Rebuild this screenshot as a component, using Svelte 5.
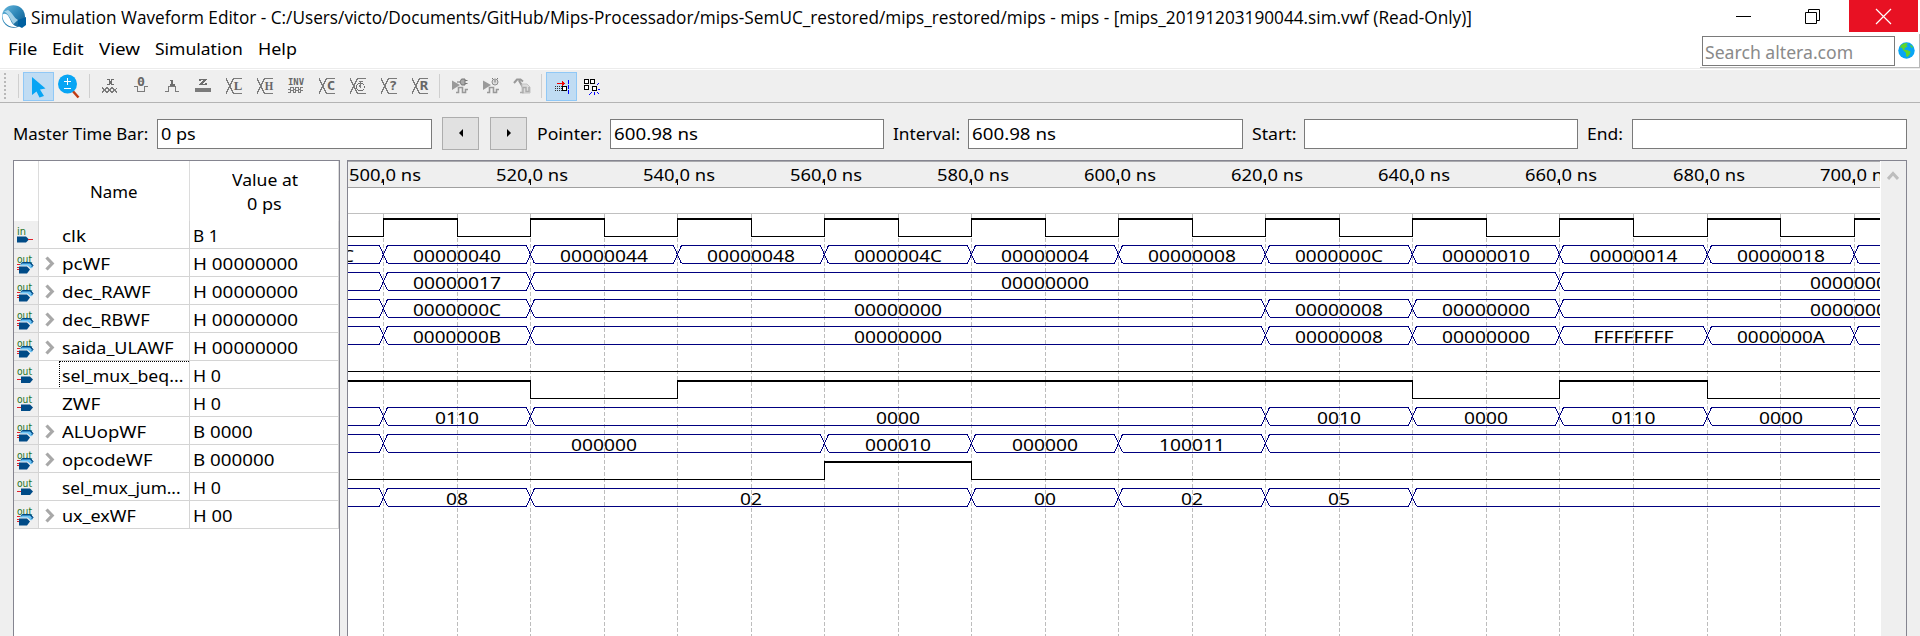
<script>
  // Stretches a label horizontally so it occupies exactly the given width.
  function fit(node, width) {
    const natural = node.offsetWidth;
    if (natural) node.style.transform = `scaleX(${width / natural})`;
  }

  const menu = [['File', 29], ['Edit', 32], ['View', 41], ['Simulation', 88], ['Help', 39]];

  const signals = [
    { name: 'clk', w: 24, value: 'B 1', vw: 25, kind: 'in' },
    { name: 'pcWF', w: 48, value: 'H 00000000', vw: 105, kind: 'bus' },
    { name: 'dec_RAWF', w: 89, value: 'H 00000000', vw: 105, kind: 'bus' },
    { name: 'dec_RBWF', w: 88, value: 'H 00000000', vw: 105, kind: 'bus' },
    { name: 'saida_ULAWF', w: 112, value: 'H 00000000', vw: 105, kind: 'bus' },
    { name: 'sel_mux_beq...', w: 121, value: 'H 0', vw: 28, kind: 'out', focus: true },
    { name: 'ZWF', w: 38, value: 'H 0', vw: 28, kind: 'out' },
    { name: 'ALUopWF', w: 84, value: 'B 0000', vw: 60, kind: 'bus' },
    { name: 'opcodeWF', w: 90, value: 'B 000000', vw: 82, kind: 'bus' },
    { name: 'sel_mux_jum...', w: 119, value: 'H 0', vw: 28, kind: 'out' },
    { name: 'ux_exWF', w: 74, value: 'H 00', vw: 39, kind: 'bus' }
  ];

  // Canvas coordinates start at the left edge of the wave area; one step is 10 ns.
  const gx = (step) => 35 + Math.round(73.53 * step);
  const grid = Array.from({ length: 21 }, (_, i) => gx(i));
  const ticks = Array.from({ length: 11 }, (_, i) => ({ x: gx(i * 2), label: `${500 + i * 20},0 ns` }));

  const buses = [
    { row: 1, edges: [-1, 0, 1, 2, 3, 4, 5, 6, 7, 8, 9, 10, 11], values: ['0000003C', '00000040', '00000044', '00000048', '0000004C', '00000004', '00000008', '0000000C', '00000010', '00000014', '00000018', ''] },
    { row: 2, edges: [0, 1, 8, 12], values: ['00000017', '00000000', '00000000'] },
    { row: 3, edges: [0, 1, 6, 7, 8, 12], values: ['0000000C', '00000000', '00000008', '00000000', '00000000'] },
    { row: 4, edges: [0, 1, 6, 7, 8, 9, 10], values: ['0000000B', '00000000', '00000008', '00000000', 'FFFFFFFF', '0000000A'] },
    { row: 7, edges: [0, 1, 6, 7, 8, 9, 10], values: ['0110', '0000', '0010', '0000', '0110', '0000'] },
    { row: 8, edges: [0, 3, 4, 5, 6], values: ['000000', '000010', '000000', '100011'] },
    { row: 10, edges: [0, 1, 4, 5, 6, 7], values: ['08', '02', '00', '02', '05'] }
  ];
  const levels = [
    { row: 0, start: 0, flips: Array.from({ length: 21 }, (_, i) => i) },
    { row: 5, start: 0, flips: [] },
    { row: 6, start: 1, flips: [2, 4, 14, 16, 18] },
    { row: 9, start: 0, flips: [6, 8] }
  ];
  const rowTop = (row) => 218 + 27 * row - 161;

  function busPath({ row, edges }) {
    const t = rowTop(row) + 0.5, b = t + 18;
    let d = `M0 ${t}`, e = `M0 ${b}`;
    for (const s of edges) {
      const x = gx(s * 2) + 0.5;
      if (x < 0 || x > 1540) continue;
      d += `H${x - 4}L${x + 4} ${b}M${x + 4} ${t}`;
      e += `H${x - 4}L${x + 4} ${t}M${x + 4} ${b}`;
    }
    return `${d}H1532${e}H1532`;
  }
  function levelSegments({ row, start, flips }) {
    const out = [];
    let x = 0, v = start;
    const t = rowTop(row);
    for (const s of [...flips, null]) {
      const nx = s === null ? 1532 : gx(s);
      out.push({ x, w: nx - x + 1, y: v ? t : t + 18, h: v ? 2 : 1 });
      if (s !== null) out.push({ x: nx, w: 1, y: t, h: 19 });
      x = nx;
      v = 1 - v;
    }
    return out;
  }
  const bits = levels.flatMap(levelSegments);
  const labels = buses.flatMap((b) =>
    b.values.map((v, i) => ({
      v,
      x: (gx(b.edges[i] * 2) + gx(b.edges[i + 1] * 2)) / 2 + 0.5,
      y: rowTop(b.row) + 17,
      w: v === 'FFFFFFFF' ? 80 : v.length * 11
    })).filter((l) => l.v)
  );

  const tools = ['x', '0', '1', 'z', 'L', 'H', 'inv', 'C', 'clock', '?', 'R'];
</script>

{#snippet label(text, width)}
  <span class="fit" style="width:{width}px"><span use:fit={width}>{text}</span></span>
{/snippet}

{#snippet toolIcon(t)}
  <svg class="ti" width="18" height="18" viewBox="-1 -1 18 18" shape-rendering="crispEdges">
    {#if t === 'x'}
      <path class="st" d="M0 9.5L5 14.5L10 9.5L15 14.5M0 14.5L5 9.5L10 14.5L15.5 9.5" />
      <path d="M5 1.5H7L10 6.5H12M12 1.5H10L7 6.5H5" fill="none" stroke="#6d6d6d" stroke-width="1.500" />
    {:else if t === '0'}
      <path class="st" d="M1 8.500H4.500V13.500H11.500V8.500H15" />
      <text class="b" x="8" y="8" text-anchor="middle" textLength="8" lengthAdjust="spacingAndGlyphs">0</text>
    {:else if t === '1'}
      <path class="st" d="M1 13.500H4.500V8.500H11.500V13.500H15" />
      <path d="M6 2.500H8V7M6 7H10.500" fill="none" stroke="#6d6d6d" stroke-width="1.500" />
    {:else if t === 'z'}
      <rect x="0" y="10" width="16" height="4" fill="#7b7b7b" />
      <path d="M5 3V1.500H10.500L5.500 6.500H11V5" fill="none" stroke="#6d6d6d" stroke-width="1.500" />
    {:else if t === 'inv'}
      <text class="b" x="8" y="7" text-anchor="middle" textLength="16" lengthAdjust="spacingAndGlyphs" style="font-size:9px">INV</text>
      <path class="st" d="M0 11.500H2.500V9.500H5.500V11.500H7.500V9.500H10.500V11.500H12.500V9.500H15M0 14.500H2.500V12.500H5.500V14.500H7.500V12.500H10.500V14.500H12.500V12.500H15" />
    {:else}
      <path class="st" d="M0 .5L7.500 15.500H16M0 15.500L7.500 .5H16" />
      {#if t === 'clock'}
        <circle cx="10.500" cy="9" r="3.800" fill="#efefef" stroke="#6d6d6d" />
        <path class="st" d="M10.500 3V9.500M8.500 3.500H12.500M10.500 9.500L9 7.500" />
      {:else}
        <text class="b" class:serif={t === 'L' || t === 'H'} x="12" y="12" text-anchor="middle" textLength="8.500" lengthAdjust="spacingAndGlyphs">{t}</text>
      {/if}
    {/if}
  </svg>
{/snippet}

<div class="window">
  <header class="title">
    <svg width="26" height="28" viewBox="0 0 26 28">
      <defs>
        <linearGradient id="orb" x1="0" y1="0" x2="1" y2="1">
          <stop offset="0" stop-color="#69b9df" /><stop offset=".5" stop-color="#2d86b7" /><stop offset="1" stop-color="#075287" />
        </linearGradient>
      </defs>
      <ellipse cx="12.500" cy="14.500" rx="11.500" ry="11.300" fill="url(#orb)" />
      <path d="M1.500 12.500C5 10 7.500 13.500 9.500 18C11 22 13.500 24.500 17 24.500C8 27 1 20.500 1.500 12.500Z" fill="#fff" />
      <path d="M7 8C11 10 13 16 17 18L12.500 22C9 17 8 12 3 9.500Z" fill="#bfe2f2" opacity=".8" />
      <path d="M17 18L25 15V23L21 26L17 24Z" fill="#0060a0" />
    </svg>
    <div class="caption">{@render label('Simulation Waveform Editor - C:/Users/victo/Documents/GitHub/Mips-Processador/mips-SemUC_restored/mips_restored/mips - mips - [mips_20191203190044.sim.vwf (Read-Only)]', 1441)}</div>
    <div class="controls">
      <svg width="70" height="32"><path d="M26 16.500H41" stroke="#000" /></svg>
      <svg width="69" height="32"><path d="M25.500 12.500H36.500V23.500H25.500ZM28.500 12V9.500H39.500V20.500H37" fill="none" stroke="#000" /></svg>
      <svg class="close" width="69" height="32"><path d="M27 9L42 24M42 9L27 24" stroke="#fff" stroke-width="1.200" /></svg>
    </div>
  </header>

  <div class="menubar">
    <nav>{#each menu as [m, w]}{@render label(m, w)}{/each}</nav>
    <div class="search">
      <div class="box">{@render label('Search altera.com', 148)}</div>
      <svg width="17" height="17" viewBox="0 0 17 17">
        <circle cx="8.500" cy="8.500" r="8.200" fill="#08a5f4" />
        <path d="M3 3L7 1L10 1.500L8 3.500L10 4L7 6L6 7.500L9 8L12.500 9.500L12 12L9.500 15L8 14V11L5 8L4 5.500L2 6Z" fill="#5fd52b" />
        <path d="M12.500 2.500L15 5L14 6L12.500 4.500Z" fill="#5fd52b" />
      </svg>
    </div>
  </div>

  <div class="toolbar">
    <i class="grip"></i><i class="sep first"></i>
    <span class="tool on">
      <svg width="29" height="28"><path d="M8 5L21.500 16.500L16 17.500L20 24L15.500 25.500L12.500 19.500L8 23Z" fill="#08a5f4" /></svg>
    </span>
    <span class="tool">
      <svg width="31" height="29"><path d="M17 17L24.500 25.500" stroke="#bf3b12" stroke-width="2.500" /><circle cx="13.500" cy="12" r="9.500" fill="#08a5f4" /><path d="M10 9.500H17M13.500 6V13M10 16.500H17" stroke="#fff" /></svg>
    </span>
    <i class="sep"></i>
    {#each tools as t}<span class="tool">{@render toolIcon(t)}</span>{/each}
    <i class="sep"></i>
    {#each ['plug', 'timer', 'hammer'] as t}
      <span class="tool">
        <svg width="18" height="18" viewBox="-1 -1 18 18">
          {#if t === 'hammer'}
            <path d="M0 5L3 1.500H6.500L9 3.500M5 2.500L11 13" fill="none" stroke="#999" stroke-width="2" />
            <path d="M8 6H13L16 9V15H8Z" fill="#ddd" stroke="#c4c4c4" /><path d="M6 14.500H9V9.500H12V13.500H15V9" fill="none" stroke="#aaa" stroke-width="1.400" />
          {:else}
            <path d="M0 2.500L8 7L0 12Z" fill="#9a9a9a" />
            <path d="M4 14.500H6.500V9.500H10.500V14.500H13.500V11.500H16" fill="none" stroke="#999" stroke-width="1.600" />
            {#if t === 'plug'}
              <path d="M5 4H8M13 2.500H15.500M13 5.500H15.500" stroke="#777" /><path d="M8 4L9.500 1H13V7H9.500Z" fill="#aaa" stroke="#777" />
            {:else}
              <circle cx="12" cy="4" r="3" fill="#ddd" stroke="#8d8d8d" /><path d="M12 2V4.500M9 0L10 1M15 0L14 1" stroke="#777" />
            {/if}
          {/if}
        </svg>
      </span>
    {/each}
    <i class="sep"></i>
    <span class="tool on">
      <svg width="29" height="28" shape-rendering="crispEdges"><path d="M10 11.500H16" stroke="#e00" /><path d="M15 9L18 11.500L15 14Z" fill="#e00" /><path d="M8 14.500H15M8 16.500H15M8 18.500H15" stroke="#333" stroke-dasharray="1 1" /><rect x="15.500" y="14.500" width="4" height="4" fill="#fff" stroke="#000" /><path d="M21.500 8V22" stroke="#00f" stroke-dasharray="4 1" /></svg>
    </span>
    <span class="tool">
      <svg width="31" height="29" shape-rendering="crispEdges"><g fill="#fff" stroke="#000"><rect x="7.500" y="7.500" width="4" height="4" /><rect x="13.500" y="7.500" width="4" height="4" /><rect x="7.500" y="13.500" width="4" height="4" /><rect x="15.500" y="14.500" width="4" height="4" /></g><path d="M20 13L22 11M20.500 17.500H23M20 20L22 22M17.500 20V23M15 20L12 23" stroke="#00f" /></svg>
    </span>
  </div>

  <div class="times">
    {@render label('Master Time Bar:', 135)}
    <div class="field f1">{@render label('0 ps', 35)}</div>
    <div class="nudge"><svg width="6" height="9"><path d="M5 0V8L1 4Z" /></svg></div>
    <div class="nudge second"><svg width="6" height="9"><path d="M1 0V8L5 4Z" /></svg></div>
    {@render label('Pointer:', 65)}
    <div class="field f2">{@render label('600.98 ns', 84)}</div>
    {@render label('Interval:', 67)}
    <div class="field f3">{@render label('600.98 ns', 84)}</div>
    {@render label('Start:', 44)}
    <div class="field f4"></div>
    {@render label('End:', 36)}
    <div class="field f5"></div>
  </div>

  <main>
    <section class="signals">
      <div class="head">
        <div class="ic"></div>
        <div class="nm">{@render label('Name', 48)}</div>
        <div class="vl">{@render label('Value at', 66)}{@render label('0 ps', 35)}</div>
      </div>
      {#each signals as s}
        <div class="row">
          <div class="ic">
            <svg width="17" height="20" viewBox="0 0 17 20">
              {#if s.kind === 'in'}
                <text class="dir" x="0" y="7" textLength="9" lengthAdjust="spacingAndGlyphs">in</text>
                <path d="M0 8.500H9L12 11.500L9 14.500H0Z" fill="#004b87" /><path d="M11 11.500H16" stroke="#e0202a" />
              {:else}
                <text class="dir" x="0" y="6.500" textLength="15" lengthAdjust="spacingAndGlyphs">out</text>
                {#if s.kind === 'out'}
                  <path d="M4 8.500H13L16 11.500L13 15H4Z" fill="#004b87" /><path d="M0 11.500H4" stroke="#e0202a" />
                {:else}
                  <path d="M3.500 8L5.500 6H13.500L16 9.500L14 12L11 9H3.500Z" fill="#004b87" /><path d="M3 9.500H10.500L14 12.500L16 11L13 7.500H5Z" fill="#6cc4f5" />
                  <path d="M2 10.500H10L13 13.500L10 17.500H2Z" fill="#004b87" /><path d="M14 7L16 9.500L14.500 11" fill="none" stroke="#004b87" />
                  <path d="M0 8.500H3M0 11.500H2M0 13.500H2" stroke="#e0202a" />
                {/if}
              {/if}
            </svg>
          </div>
          <div class="nm" class:focus={s.focus}>
            <span class="tw">{#if s.kind === 'bus'}<svg width="10" height="15"><path d="M1.500 1.500L7.200 7.500L1.500 13.500" fill="none" stroke="#a8a8a8" stroke-width="3.200" /></svg>{/if}</span>
            {@render label(s.name, s.w)}
          </div>
          <div class="vl">{@render label(s.value, s.vw)}</div>
        </div>
      {/each}
    </section>

    <section class="waves">
      <svg width="1532" height="475" viewBox="0 0 1532 475">
        <rect width="1532" height="26" fill="#efefef" />
        <rect width="1532" height="1" fill="#a9a9ad" />
        <rect y="26" width="1532" height="1" fill="#a0a0a0" />
        <rect y="52" width="1532" height="1" fill="#c0c0c0" />
        {#each grid as x}
          <line x1={x + 0.5} x2={x + 0.5} y1="53" y2="475" stroke="#bdbdbd" stroke-dasharray="4 2" />
        {/each}
        {#each ticks as t}
          <rect x={t.x} y="19" width="1" height="5" />
          <text x={t.x + 2} y="20" text-anchor="middle" textLength="72" lengthAdjust="spacingAndGlyphs">{t.label}</text>
        {/each}
        {#each buses as b}<path d={busPath(b)} fill="none" stroke="#000080" shape-rendering="crispEdges" />{/each}
        {#each bits as s}<rect x={s.x} y={s.y} width={s.w} height={s.h} />{/each}
        {#each labels as l}
          <text x={l.x} y={l.y} text-anchor="middle" textLength={l.w} lengthAdjust="spacingAndGlyphs">{l.v}</text>
        {/each}
      </svg>
      <div class="scroll"><svg width="12" height="11"><path d="M1 9L6 3.500L11 9" fill="none" stroke="#bdbdbd" stroke-width="3" /></svg></div>
    </section>
  </main>
</div>

<style>
  :global(body) { margin: 0; background: #efefef; overflow: hidden; }
  .window { width: 1920px; height: 636px; overflow: hidden; display: flex; flex-direction: column; box-sizing: border-box; background: #efefef; color: #000; font: 16.5px/24px "Noto Sans", "Open Sans", sans-serif; }
  .window :global(*) { box-sizing: border-box; }
  svg { display: block; flex: none; }
  .fit { display: inline-block; flex: none; white-space: nowrap; }
  .fit > span { display: inline-block; transform-origin: 0 50%; }

  .title { height: 32px; flex: none; display: flex; background: #fff; padding-left: 1px; }
  .title > svg { margin-top: 2px; }
  .caption { margin-left: 3.5px; padding-top: 6px; flex: 1; font-size: 17.3px; font-family: "Open Sans", "Noto Sans", sans-serif; }
  .controls { display: flex; margin-right: 2px; }
  .close { background: #e81123; }

  .menubar { height: 38px; flex: none; display: flex; justify-content: space-between; background: #fff; border-bottom: 1px solid #fff; box-shadow: inset 0 -1px #ececec; }
  nav { display: flex; gap: 15px; padding: 5px 0 0 8px; }
  .search { width: 220px; height: 34px; margin-top: 2px; display: flex; align-items: center; border-right: 1px solid #b9b9b9; border-bottom: 1px solid #b9b9b9; }
  .search .box { width: 193px; height: 30px; margin: 0 3px 0 2px; border: 1px solid #7a7a7a; padding: 3px 0 0 2px; font-size: 17.5px; color: #8a8a8a; }

  .toolbar { height: 33px; flex: none; display: flex; align-items: center; border-bottom: 1px solid #b4b4b4; padding-left: 4px; }
  .grip { width: 2px; height: 26px; background: repeating-linear-gradient(#b8b8b8 0 2px, transparent 2px 4px); }
  .sep { width: 1px; height: 24px; margin: 0 4px; background: #cfcfcf; }
  .sep.first { margin: 0 4px 0 12px; }
  .tool { width: 31px; height: 29px; display: flex; align-items: center; justify-content: center; }
  .tool.on { background: #c0dcf3; border: 1px solid #90c8f6; }
  .st { fill: none; stroke: #7b7b7b; }
  .b { font: bold 11.5px "DejaVu Sans Mono", monospace; fill: #666; }
  .b.serif { font-family: "Liberation Serif", serif; font-size: 12.5px; }

  .times { height: 57px; flex: none; display: flex; align-items: center; padding: 4px 0 0 13px; }
  .field { width: 275px; height: 30px; border: 1px solid #7a7a7a; background: #fff; padding: 2px 0 0 3px; }
  .f1 { margin: 0 10px 0 9px; }
  .f2 { width: 274px; margin: 0 9px 0 8px; }
  .f3 { margin: 0 9px 0 8px; }
  .f4 { width: 274px; margin: 0 9px 0 8px; }
  .f5 { margin-left: 9px; }
  .nudge { width: 37px; height: 33px; background: #e1e1e1; border: 1px solid #adadad; display: flex; align-items: center; justify-content: center; }
  .second { margin: 0 10px 0 11px; }

  main { flex: 1; min-height: 0; display: flex; padding-left: 13px; gap: 7px; }
  .signals { width: 327px; background: #fff; border: 1px solid #858590; border-bottom: 0; }
  .signals, .waves { height: 476px; }
  .head { display: flex; height: 60px; }
  .head .ic { width: 25px; border-right: 1px solid #dcdcdc; }
  .head .nm { width: 151px; justify-content: center; border-right: 1px solid #dcdcdc; padding-top: 2px; }
  .head .vl { flex: 1; display: flex; flex-direction: column; align-items: center; justify-content: center; padding: 1px 0 0 1px; border-right: 1px solid #dcdcdc; }
  .row { display: flex; height: 28px; border-bottom: 1px solid #d4d4d4; }
  .row .ic { width: 25px; background: #efefef; border-right: 1px solid #d4d4d4; padding: 7px 0 0 3px; }
  .row .ic svg { overflow: visible; }
  .nm { width: 151px; display: flex; align-items: center; }
  .row .nm { border-right: 1px solid #d4d4d4; padding-top: 2px; position: relative; }
  .focus::before { content: ""; position: absolute; inset: 0 0 1px 20px; border: 1px dotted #000; border-width: 1px 0 0 1px; }
  .tw { width: 23px; padding-left: 6px; flex: none; }
  .row .vl { flex: 1; padding: 3px 0 0 3px; border-right: 1px solid #d4d4d4; }
  .dir { font: 11px "DejaVu Sans", sans-serif; fill: #267326; }

  .waves { width: 1560px; background: #fff; border: 1px solid #858590; border-bottom: 0; display: flex; justify-content: space-between; }
  .scroll { width: 25px; background: #efefef; padding: 9px 0 0 6px; }
</style>
